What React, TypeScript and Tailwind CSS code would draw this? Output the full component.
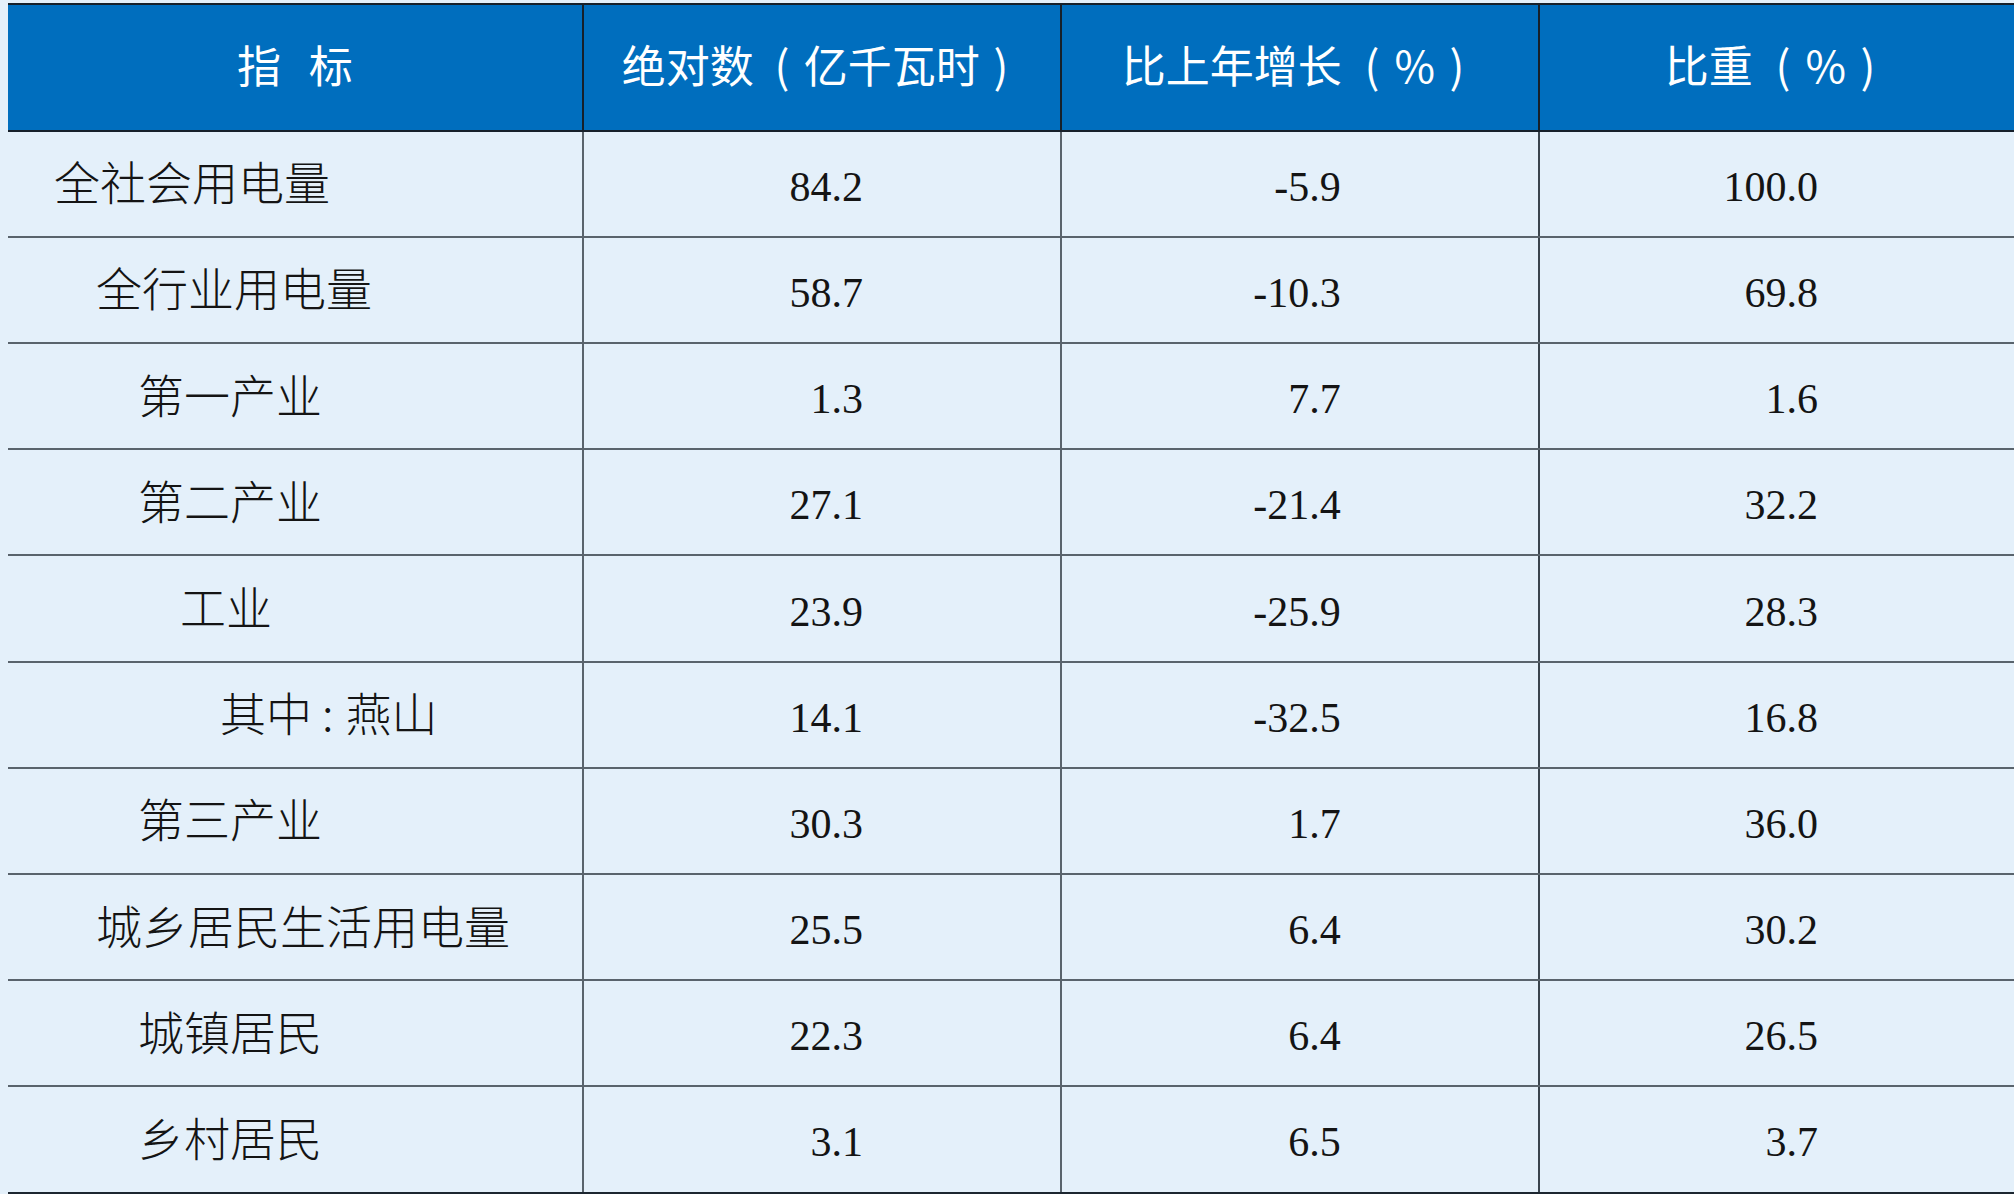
const rows = [
  { label: "全社会用电量", indent: 0, abs: "84.2", growth: "-5.9", share: "100.0" },
  { label: "全行业用电量", indent: 1, abs: "58.7", growth: "-10.3", share: "69.8" },
  { label: "第一产业", indent: 2, abs: "1.3", growth: "7.7", share: "1.6" },
  { label: "第二产业", indent: 2, abs: "27.1", growth: "-21.4", share: "32.2" },
  { label: "工业", indent: 3, abs: "23.9", growth: "-25.9", share: "28.3" },
  { label: "其中:燕山", indent: 4, abs: "14.1", growth: "-32.5", share: "16.8" },
  { label: "第三产业", indent: 2, abs: "30.3", growth: "1.7", share: "36.0" },
  { label: "城乡居民生活用电量", indent: 1, abs: "25.5", growth: "6.4", share: "30.2" },
  { label: "城镇居民", indent: 2, abs: "22.3", growth: "6.4", share: "26.5" },
  { label: "乡村居民", indent: 2, abs: "3.1", growth: "6.5", share: "3.7" },
];

const indents = ["pl-[46px]", "pl-[88px]", "pl-[130px]", "pl-[172px]", "pl-[212px]"];

const sans = "font-['Noto_Sans_CJK_SC','Noto_Sans',sans-serif]";
const serif = "font-['Liberation_Serif','Noto_Sans_CJK_SC',serif]";

const Label = ({ text }: { text: string }) => {
  // the colon sits on the baseline with a little air on both sides
  if (text.includes(":")) {
    const [a, b] = text.split(":");
    return (
      <span>
        {a}
        <span className="ml-[10px] mr-[12px]">:</span>
        {b}
      </span>
    );
  }
  return <span>{text}</span>;
};

// header parens are spaced wide, each glyph centred in its own box
const Open = ({ wide }: { wide?: boolean }) => (
  <span className={`inline-block text-center ${wide ? "w-[52px] pl-[8px]" : "w-[50px] pl-[6px]"}`}>(</span>
);
const Close = () => <span className="inline-block w-[42px] text-center">)</span>;
const Pct = () => <span className="inline-block w-[42px] text-center">%</span>;

const App = () => {
  return (
    <div className="w-[2014px] h-[1194px] overflow-hidden bg-[#e4f0fa] pt-[3px] pl-[8px]">
      <div className="flex flex-col">
        {/* Header */}
        <div
          className={`flex h-[128.7px] border-t-2 border-b-2 border-[#16202a] bg-[#006ebe] text-white text-[44px] font-normal ${sans}`}
        >
          <div className="w-[575.7px] border-r-2 border-[#16202a] flex items-center justify-center pb-[6px] [word-spacing:18px]">
            指 标
          </div>
          <div className="w-[478.3px] border-r-2 border-[#16202a] flex items-center justify-center pb-[6px] whitespace-nowrap">
            绝对数<Open />亿千瓦时<Close />
          </div>
          <div className="w-[477.7px] border-r-2 border-[#16202a] flex items-center justify-center pb-[6px] whitespace-nowrap">
            比上年增长<Open wide />
            <Pct />
            <Close />
          </div>
          <div className="flex-1 flex items-center justify-center pb-[6px] whitespace-nowrap">
            比重<Open wide />
            <Pct />
            <Close />
          </div>
        </div>

        {/* Body */}
        {rows.map((row, i) => (
          <div
            key={i}
            className={`flex h-[106.2px] border-b-2 ${
              i === rows.length - 1 ? "border-[#1c2630]" : "border-[#59636c]"
            } text-[#141414]`}
          >
            <div
              className={`w-[575.7px] border-r-2 border-[#59636c] flex items-center pb-[6px] text-[46px] font-light ${sans} ${indents[row.indent]}`}
            >
              <Label text={row.label} />
            </div>
            <div
              className={`w-[478.3px] border-r-2 border-[#59636c] flex items-center justify-end pr-[197px] pt-[7px] text-[42px] ${serif}`}
            >
              {row.abs}
            </div>
            <div
              className={`w-[477.7px] border-r-2 border-[#3a444d] flex items-center justify-end pr-[197px] pt-[7px] text-[42px] ${serif}`}
            >
              {row.growth}
            </div>
            <div
              className={`flex-1 flex items-center justify-end pr-[196px] pt-[7px] text-[42px] ${serif}`}
            >
              {row.share}
            </div>
          </div>
        ))}
      </div>
    </div>
  );
};

export default App;
